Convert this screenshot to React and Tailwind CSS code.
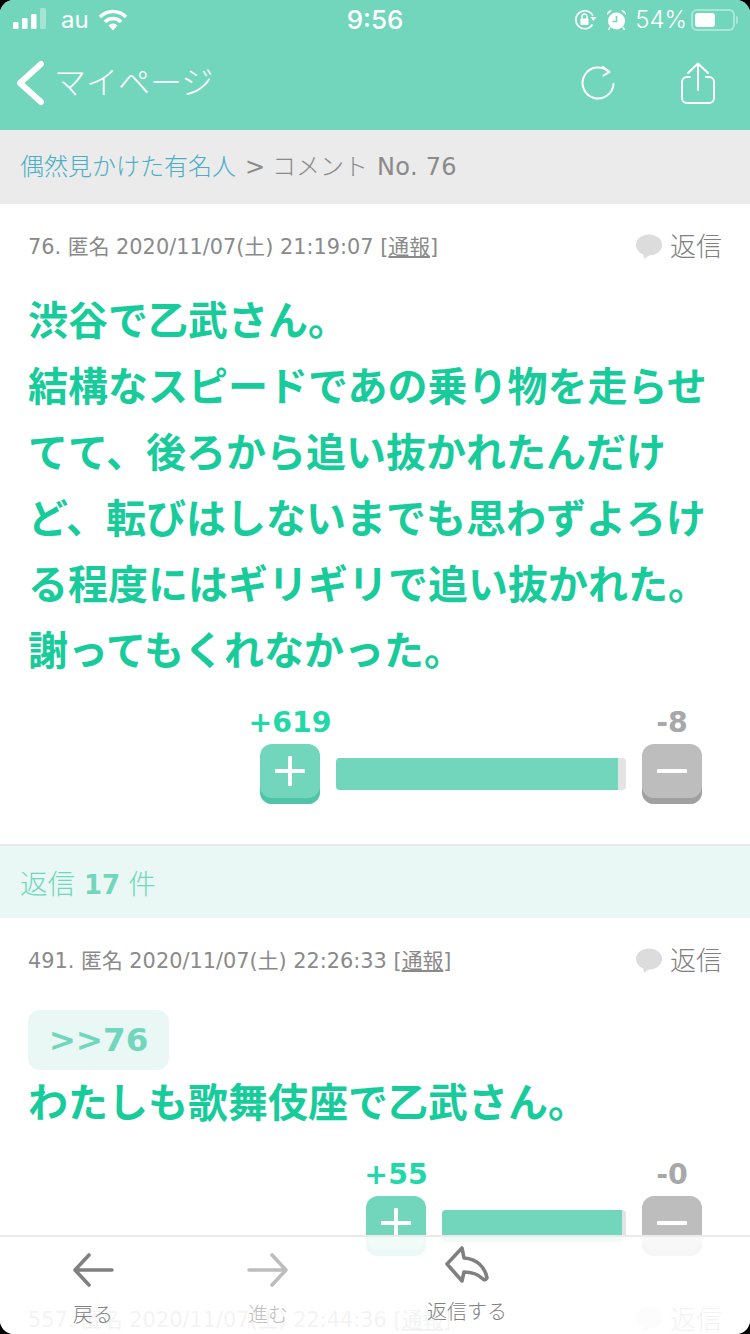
import React from 'react';

const Bubble = ({ color = '#dcdcdc' }) => (
  <svg width="28" height="26" viewBox="0 0 28 26">
    <ellipse cx="14" cy="11" rx="13" ry="10.5" fill={color} />
    <path d="M8 18 L9 25 L16 20 Z" fill={color} />
  </svg>
);

const MetaRow = ({ no, time }) => (
  <div className="flex items-center justify-between pl-[28px] pr-[28px] h-[32px]">
    <p className="text-[20.85px] text-[#8a8a8a] leading-[32px] whitespace-nowrap">
      {no}. 匿名 2020/11/07(土) {time} [<span className="underline">通報</span>]
    </p>
    <div className="flex items-center gap-[7px]">
      <Bubble />
      <span className="text-[26px] text-[#808080] leading-[32px] font-light">返信</span>
    </div>
  </div>
);

const VoteRow = ({ plus, minus, barWidth, fill }) => (
  <div className="flex flex-col pr-[48px]">
    <div className="flex justify-end h-[44px] pt-[1px]">
      <div className="flex items-center justify-center w-[60px]" style={{ marginRight: barWidth + 32 }}>
        <span className="text-[28.4px] font-bold leading-[44px] text-[#22d8a8] whitespace-nowrap">{plus}</span>
      </div>
      <div className="flex items-center justify-center w-[60px]">
        <span className="text-[28.4px] font-bold leading-[44px] text-[#a8a8a8] whitespace-nowrap">{minus}</span>
      </div>
    </div>
    <div className="flex justify-end items-start gap-[16px]">
      <button className="w-[60px] h-[60px] rounded-[12px] pb-[6px] flex items-center justify-center bg-[#72d6bc] shadow-[inset_0_-6px_0_#4fc4a6]">
        <svg width="30" height="30" viewBox="0 0 30 30">
          <path d="M15 1.5V28.5M1.5 15H28.5" stroke="#fff" strokeWidth="4" strokeLinecap="round" />
        </svg>
      </button>
      <div className="h-[32px] mt-[14px] rounded-[4px] bg-[#e3e3e3] overflow-hidden" style={{ width: barWidth }}>
        <div className="h-full bg-[#72d6bc]" style={{ width: fill }} />
      </div>
      <button className="w-[60px] h-[60px] rounded-[12px] pb-[6px] flex items-center justify-center bg-[#bdbdbd] shadow-[inset_0_-6px_0_#a0a0a0]">
        <svg width="30" height="30" viewBox="0 0 30 30">
          <path d="M1.5 15H28.5" stroke="#fff" strokeWidth="4" strokeLinecap="round" />
        </svg>
      </button>
    </div>
  </div>
);

const StatusBar = () => (
  <div className="relative flex items-center justify-between h-[40px] pl-[13px] pr-[12px] text-white font-['Inter','Noto_Sans',sans-serif]">
    <div className="flex items-center">
      <svg width="34" height="24" viewBox="0 0 34 24">
        <rect x="0" y="14" width="5.5" height="7" rx="1.2" fill="#fff" />
        <rect x="9" y="10" width="5.5" height="11" rx="1.2" fill="#fff" />
        <rect x="18" y="6" width="5.5" height="15" rx="1.2" fill="#fff" />
        <rect x="27" y="0" width="6" height="21" rx="1.2" fill="#fff" fillOpacity="0.35" />
      </svg>
      <span className="ml-[14px] text-[24px] leading-[40px]">au</span>
      <svg className="ml-[9px]" width="30" height="22" viewBox="0 0 30 22">
        <path d="M2 8 A18 18 0 0 1 28 8" fill="none" stroke="#fff" strokeWidth="3.6" />
        <path d="M7 13 A11 11 0 0 1 23 13" fill="none" stroke="#fff" strokeWidth="3.6" />
        <path d="M10.5 16.5 A6 6 0 0 1 19.5 16.5 L15 21.5 Z" fill="#fff" />
      </svg>
    </div>
    <span className="absolute left-0 right-0 text-center text-[26px] font-medium leading-[40px]">9:56</span>
    <div className="flex items-center">
      <svg width="23" height="22" viewBox="0 0 23 22">
        <path d="M18.5 15.5 A9 9 0 1 1 19 7" fill="none" stroke="#fff" strokeWidth="1.6" />
        <path d="M16.5 8 H22.5 L19.5 12 Z" fill="#fff" />
        <rect x="6.5" y="9.5" width="8" height="6.5" rx="1" fill="#fff" />
        <path d="M8 10 V7.5 A2.5 2.5 0 0 1 13 7.5 V10" fill="none" stroke="#fff" strokeWidth="1.4" />
      </svg>
      <svg className="ml-[9px]" width="21" height="22" viewBox="0 0 21 22">
        <circle cx="10.5" cy="12" r="8.5" fill="#fff" />
        <path d="M10.5 7V12.5H6.5" fill="none" stroke="#72d6bc" strokeWidth="1.6" />
        <path d="M1 6 A4 4 0 0 1 6 1.5 Z M20 6 A4 4 0 0 0 15 1.5 Z" fill="#fff" />
        <path d="M4 18 L2.5 21 M17 18 L18.5 21" stroke="#fff" strokeWidth="1.6" />
      </svg>
      <span className="ml-[8px] text-[24px] font-light leading-[40px]">54%</span>
      <div className="ml-[4px] flex items-center">
        <div className="w-[44px] h-[22px] rounded-[6px] border-2 border-white/40 p-[2px]">
          <div className="w-[20px] h-full rounded-[3px] bg-white" />
        </div>
        <div className="w-[2px] h-[8px] rounded-r-[2px] bg-white/40 ml-[1px]" />
      </div>
    </div>
  </div>
);

const NavBar = () => (
  <div className="flex items-center justify-between h-[90px] pl-[14px] pr-[34px] pb-[4px]">
    <div className="flex items-center">
      <svg width="32" height="46" viewBox="0 0 32 46">
        <path d="M27 4 L6 23 L27 42" fill="none" stroke="#fff" strokeWidth="6" strokeLinecap="round" strokeLinejoin="round" />
      </svg>
      <span className="ml-[8px] text-[32px] font-light text-white leading-[40px]">マイページ</span>
    </div>
    <div className="flex items-center gap-[64px]">
      <svg width="36" height="36" viewBox="0 0 36 36">
        <path d="M29 7 A15.5 15.5 0 1 0 33.5 19" fill="none" stroke="#fff" strokeWidth="2" strokeLinecap="round" />
        <path d="M23 2 L29.5 7 L23.5 10.5" fill="none" stroke="#fff" strokeWidth="2" strokeLinecap="round" strokeLinejoin="round" />
      </svg>
      <svg width="36" height="42" viewBox="0 0 36 42">
        <path d="M10 15 H7 A5 5 0 0 0 2 20 V36 A5 5 0 0 0 7 41 H29 A5 5 0 0 0 34 36 V20 A5 5 0 0 0 29 15 H26" fill="none" stroke="#fff" strokeWidth="2" strokeLinecap="round" />
        <path d="M18 28 V2 M8 11 L18 1.5 L28 11" fill="none" stroke="#fff" strokeWidth="2" strokeLinecap="round" strokeLinejoin="round" />
      </svg>
    </div>
  </div>
);

const BottomBar = () => (
  <div className="absolute left-0 right-0 bottom-0 h-[99px] bg-white/90 border-t-2 border-[#e8e8e8]/90 flex">
    <div className="w-[186px] flex flex-col items-center pt-[16px]">
      <svg width="42" height="34" viewBox="0 0 42 34">
        <path d="M40 17 H3 M17 2 L3 17 L17 32" fill="none" stroke="#808080" strokeWidth="3.6" strokeLinecap="round" strokeLinejoin="round" />
      </svg>
      <span className="mt-[14px] text-[20px] leading-[28px] text-[#808080] font-light">戻る</span>
    </div>
    <div className="w-[164px] flex flex-col items-center pt-[16px]">
      <svg width="42" height="34" viewBox="0 0 42 34">
        <path d="M2 17 H39 M25 2 L39 17 L25 32" fill="none" stroke="#bdbdbd" strokeWidth="3.6" strokeLinecap="round" strokeLinejoin="round" />
      </svg>
      <span className="mt-[14px] text-[20px] leading-[28px] text-[#bdbdbd] font-light">進む</span>
    </div>
    <div className="w-[234px] flex flex-col items-center pt-[9px]">
      <svg width="44" height="38" viewBox="0 0 44 38">
        <path d="M2 18 L17 2 L19 12 C32 13 40 21 42 32 C41 34 39 34 38 33 C33 28 27 26 19 26 L17 35 Z" fill="none" stroke="#808080" strokeWidth="3.6" strokeLinejoin="round" />
      </svg>
      <span className="mt-[14px] text-[20px] leading-[28px] text-[#808080] font-light">返信する</span>
    </div>
  </div>
);

export default function App() {
  return (
    <div className="h-[1334px] bg-black overflow-hidden font-['DejaVu_Sans','Noto_Sans_CJK_JP',sans-serif]">
      <div className="relative h-[1334px] rounded-[14px] overflow-hidden bg-white">
        <div className="bg-[#72d6bc] h-[130px]">
          <StatusBar />
          <NavBar />
        </div>

        <div className="h-[74px] bg-[#ebebeb] flex items-center px-[20px] text-[24px] text-[#8a8a8a]">
          <span className="text-[#4aaec6] font-light">偶然見かけた有名人</span>
          <span className="ml-[9px]">&gt;</span>
          <span className="ml-[7px] font-light">コメント</span>
          <span className="ml-[9px] tracking-[0.3px]">No. 76</span>
        </div>

        <div className="h-[640px] pt-[27px]">
          <MetaRow no="76" time="21:19:07" />
          <p className="mt-[25px] px-[28px] text-[40px] leading-[66px] font-bold text-[#17cc9a]">
            渋谷で乙武さん。<br />
            結構なスピードであの乗り物を走らせてて、後ろから追い抜かれたんだけど、転びはしないまでも思わずよろける程度にはギリギリで追い抜かれた。<br />
            謝ってもくれなかった。
          </p>
          <div className="mt-[16px]">
            <VoteRow plus="+619" minus="-8" barWidth={290} fill="97.2%" />
          </div>
        </div>

        <div className="h-[74px] bg-[#e9f8f5] border-t-2 border-[#e6eaea] flex items-center px-[20px] pt-[6px] text-[27.5px] text-[#72d6bc] font-light">
          <span>返信</span>
          <span className="font-bold text-[26px] ml-[9px] mr-[8px]">17</span>
          <span>件</span>
        </div>

        <div className="h-[359px] pt-[27px] border-b-2 border-[#f0f0f0]">
          <MetaRow no="491" time="22:26:33" />
          <div className="mt-[33px] ml-[28px] w-[141px] h-[60px] rounded-[12px] bg-[#e9f8f5] flex items-center justify-center text-[32.5px] font-bold text-[#72d6bc]">
            &gt;&gt;76
          </div>
          <p className="px-[28px] text-[40px] leading-[66px] font-bold text-[#17cc9a]">
            わたしも歌舞伎座で乙武さん。
          </p>
          <div className="mt-[16px]">
            <VoteRow plus="+55" minus="-0" barWidth={184} fill="98%" />
          </div>
        </div>

        <div className="pt-[27px]">
          <MetaRow no="557" time="22:44:36" />
        </div>

        <BottomBar />
      </div>
    </div>
  );
}
